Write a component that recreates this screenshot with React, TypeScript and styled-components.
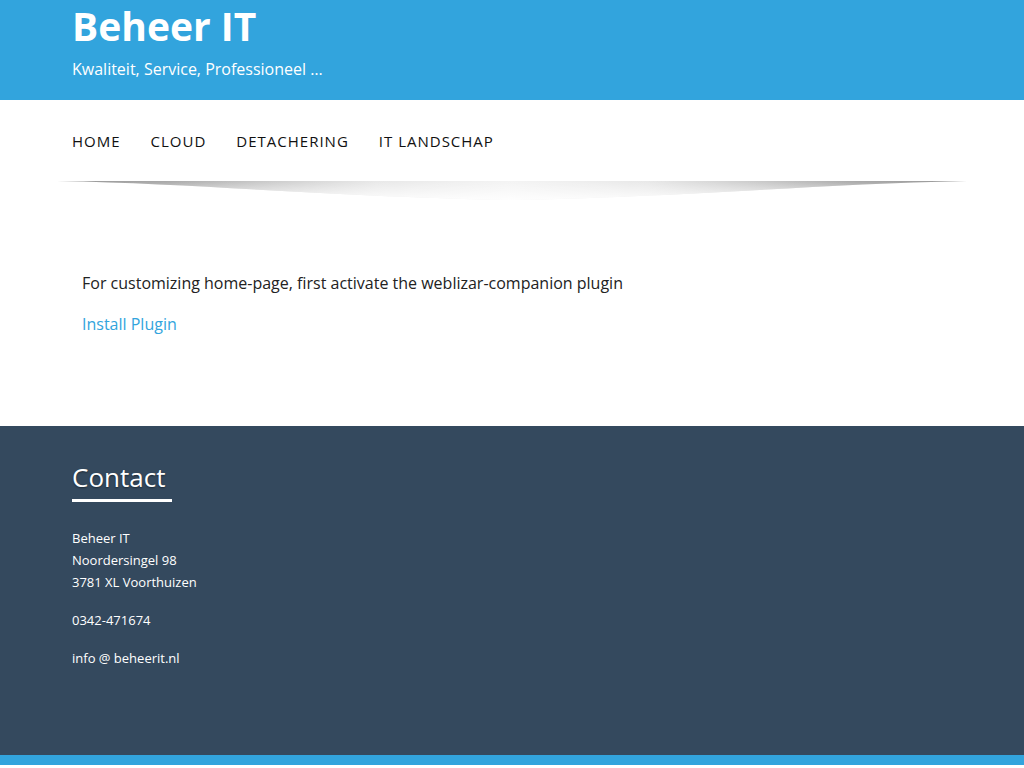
import React from "react";
import styled, { createGlobalStyle } from "styled-components";

const Global = createGlobalStyle`
  html, body { margin: 0; padding: 0; background: #fff; }
  body { font-family: "Open Sans", "Noto Sans", sans-serif; }
`;

const Header = styled.header`
  background: #32a4dd;
  height: 100px;
  box-sizing: border-box;
`;

const Container = styled.div`
  width: 910px;
  margin: 0 auto;
  padding: 0 15px;
  box-sizing: border-box;
`;

const Title = styled.h1`
  margin: 0;
  padding-top: 2px;
  font-size: 39px;
  line-height: 48px;
  font-weight: 700;
  color: #fff;
`;

const Tagline = styled.p`
  margin: 7px 0 0;
  font-size: 16px;
  line-height: 24px;
  color: #fff;
`;

const NavBar = styled.nav`
  display: flex;
  gap: 30px;
  height: 80px;
  align-items: center;
  padding-top: 2px;
  box-sizing: border-box;
`;

const NavItem = styled.a`
  font-size: 15px;
  letter-spacing: 1px;
  text-transform: uppercase;
  color: #111;
  text-decoration: none;
`;

const ShadowWrap = styled.div`
  width: 910px;
  margin: 0 auto;
  height: 22px;
  svg { display: block; }
`;

const Main = styled.main`
  padding: 69px 0 90px;
`;

const Inner = styled.div`
  padding: 0 10px;
`;

const Text = styled.p`
  margin: 0 0 17px;
  font-size: 16px;
  line-height: 24px;
  color: #222;
`;

const Link = styled.a`
  font-size: 16px;
  line-height: 24px;
  color: #32a4dd;
  text-decoration: none;
`;

const Footer = styled.footer`
  background: #34495e;
  padding: 36px 0 70px;
`;

const FooterTitle = styled.h3`
  margin: 0;
  display: inline-block;
  font-size: 26px;
  line-height: 30px;
  font-weight: 400;
  color: #fff;
  text-shadow: 0 1px 2px rgba(0,0,0,0.45);
  padding-bottom: 7px;
  border-bottom: 3px solid #fff;
  width: 100px;
`;

const Address = styled.div`
  margin-top: 25px;
  font-size: 13px;
  line-height: 22px;
  color: #fff;
`;

const Para = styled.p`
  margin: 0 0 16px;
`;

const BottomBar = styled.div`
  background: #32a4dd;
  height: 10px;
`;

export default function App() {
  return (
    <>
      <Global />
      <Header>
        <Container>
          <Title>Beheer IT</Title>
          <Tagline>Kwaliteit, Service, Professioneel …</Tagline>
        </Container>
      </Header>
      <Container>
        <NavBar>
          <NavItem href="#">Home</NavItem>
          <NavItem href="#">Cloud</NavItem>
          <NavItem href="#">Detachering</NavItem>
          <NavItem href="#">IT Landschap</NavItem>
        </NavBar>
      </Container>
      <ShadowWrap>
        <svg width="910" height="22" viewBox="0 0 910 22">
          <defs>
            <linearGradient id="sg" x1="0" x2="1" y1="0" y2="0">
              <stop offset="0" stopColor="#8f8f8f" stopOpacity="0.95" />
              <stop offset="0.12" stopColor="#9e9e9e" stopOpacity="0.9" />
              <stop offset="0.35" stopColor="#dedede" stopOpacity="0.7" />
              <stop offset="0.5" stopColor="#ececec" stopOpacity="0.6" />
              <stop offset="0.65" stopColor="#dedede" stopOpacity="0.7" />
              <stop offset="0.88" stopColor="#9e9e9e" stopOpacity="0.9" />
              <stop offset="1" stopColor="#8f8f8f" stopOpacity="0.95" />
            </linearGradient>
            <linearGradient id="vg" x1="0" x2="0" y1="0" y2="1">
              <stop offset="0" stopColor="#fff" stopOpacity="0" />
              <stop offset="1" stopColor="#fff" stopOpacity="0.9" />
            </linearGradient>
          </defs>
          <path d="M0 1 L910 1 C760 4 650 16 455 20 C260 16 150 4 0 1 Z" fill="url(#sg)" />
          <path d="M0 1 L910 1 C760 4 650 16 455 20 C260 16 150 4 0 1 Z" fill="url(#vg)" />
        </svg>
      </ShadowWrap>
      <Main>
        <Container>
          <Inner>
            <Text>For customizing home-page, first activate the weblizar-companion plugin</Text>
            <Link href="#">Install Plugin</Link>
          </Inner>
        </Container>
      </Main>
      <Footer>
        <Container>
          <FooterTitle>Contact</FooterTitle>
          <Address>
            <Para>
              Beheer IT<br />
              Noordersingel 98<br />
              3781 XL Voorthuizen
            </Para>
            <Para>0342-471674</Para>
            <Para>info @ beheerit.nl</Para>
          </Address>
        </Container>
      </Footer>
      <BottomBar />
    </>
  );
}
